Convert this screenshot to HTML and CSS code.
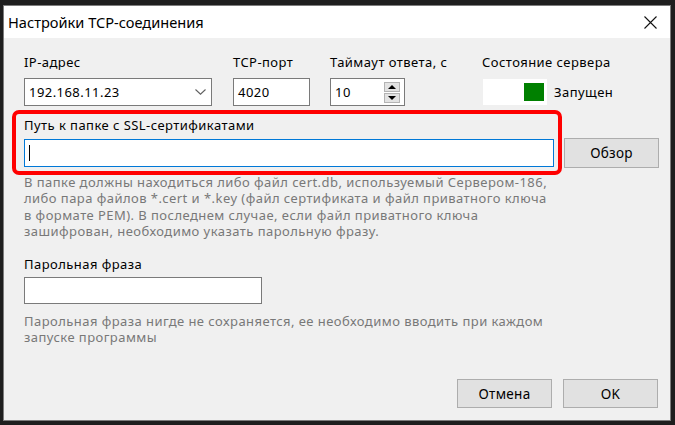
FILE: index.html
```html
<!DOCTYPE html>
<html lang="ru">
<head>
    <meta charset="UTF-8">
    <title>Настройки TCP-соединения</title>
    <link rel="stylesheet" href="styles.css">
</head>
<body>
    <div class="window">
        <div class="titlebar">
            <span class="title">Настройки TCP-соединения</span>
            <span class="close">
                <svg width="13" height="13" viewBox="0 0 13 13"><path d="M0.5 0.5L12.5 12.5M12.5 0.5L0.5 12.5" stroke="#111" stroke-width="1.1" fill="none"/></svg>
            </span>
        </div>
        <div class="content">
            <div class="top-row">
                <div class="field">
                    <div class="label">IP-адрес</div>
                    <div class="combo">
                        <span>192.168.11.23</span>
                        <svg class="chevron" width="11" height="6" viewBox="0 0 11 6"><path d="M0.5 0.5L5.5 5.2L10.5 0.5" stroke="#606060" stroke-width="1.1" fill="none"/></svg>
                    </div>
                </div>
                <div class="field">
                    <div class="label">TCP-порт</div>
                    <div class="edit port">4020</div>
                </div>
                <div class="field">
                    <div class="label">Таймаут ответа, с</div>
                    <div class="edit timeout">
                        <span>10</span>
                        <div class="spin-btns">
                            <span class="spin-btn"><i class="arrow up"></i></span>
                            <span class="spin-btn"><i class="arrow down"></i></span>
                        </div>
                    </div>
                </div>
                <div class="field">
                    <div class="label">Состояние сервера</div>
                    <div class="status">
                        <div class="status-box"><span class="led"></span></div>
                        <span>Запущен</span>
                    </div>
                </div>
            </div>

            <div class="ssl">
                <div class="highlight"></div>
                <div class="label">Путь к папке с SSL-сертификатами</div>
                <div class="ssl-row">
                    <div class="edit path focused"><span class="caret"></span></div>
                    <button class="btn">Обзор</button>
                </div>
            </div>

            <p class="hint hint-ssl">В папке должны находиться либо файл cert.db, используемый Сервером-186,<br>либо пара файлов *.cert и *.key (файл сертификата и файл приватного ключа<br>в формате PEM). В последнем случае, если файл приватного ключа<br>зашифрован, необходимо указать парольную фразу.</p>

            <div class="label pass-label">Парольная фраза</div>
            <div class="edit pass"></div>

            <p class="hint hint-pass">Парольная фраза нигде не сохраняется, ее необходимо вводить при каждом<br>запуске программы</p>

            <div class="buttons">
                <button class="btn">Отмена</button>
                <button class="btn">OK</button>
            </div>
        </div>
    </div>
</body>
</html>
```

FILE: styles.css
```css
body {
    margin: 0;
    background-color: #1e1e1e;
    font-family: "Noto Sans", "Open Sans", sans-serif;
    font-size: 13px;
    letter-spacing: 0.45px;
    color: #000;
}
.window {
    margin: 5px 0 0 3px;
    width: 666px;
    height: 414px;
    border: 1px solid #7c7c7c;
    background: #f0f0f0;
    display: flex;
    flex-direction: column;
}
.titlebar {
    height: 32px;
    background: #fff;
    display: flex;
    align-items: center;
    justify-content: space-between;
    padding: 0 13px 0 4px;
}
.title {
    font-size: 14.6px;
    letter-spacing: 0;
}
.close {
    display: flex;
}
.content {
    flex: 1;
    display: flex;
    flex-direction: column;
    padding: 16px 11px 12px 20px;
}
.label {
    height: 16px;
    line-height: 16px;
    white-space: nowrap;
}
.top-row {
    display: grid;
    grid-template-columns: 209px 97px 152px auto;
}
.field .label {
    margin-bottom: 8px;
}
.edit, .combo {
    box-sizing: border-box;
    height: 28px;
    border: 1px solid #7a7a7a;
    background: #fff;
    display: flex;
    align-items: center;
    padding-left: 4px;
}
.combo {
    width: 188px;
    justify-content: space-between;
    padding-right: 5px;
}
.port {
    width: 77px;
}
.timeout {
    width: 75px;
    justify-content: space-between;
    padding-right: 4px;
}
.spin-btns {
    display: flex;
    flex-direction: column;
    gap: 1px;
}
.spin-btn {
    box-sizing: border-box;
    width: 16px;
    height: 10px;
    background: #e3e3e3;
    border: 1px solid #b4b4b4;
    display: flex;
    align-items: center;
    justify-content: center;
}
.arrow {
    width: 0;
    height: 0;
    border-left: 4px solid transparent;
    border-right: 4px solid transparent;
}
.arrow.up {
    border-bottom: 4px solid #000;
}
.arrow.down {
    border-top: 4px solid #000;
}
.status {
    display: flex;
    align-items: center;
    gap: 7px;
    height: 28px;
    margin-left: 1px;
}
.status-box {
    width: 64px;
    height: 26px;
    background: #fff;
    display: flex;
    align-items: center;
    justify-content: flex-end;
    padding-right: 3px;
    box-sizing: border-box;
}
.led {
    width: 20px;
    height: 18px;
    background: #008000;
}
.ssl {
    position: relative;
    margin-top: 11px;
}
.highlight {
    position: absolute;
    left: -12px;
    top: -7px;
    width: 550px;
    height: 65px;
    box-sizing: border-box;
    border: 4px solid #ff0000;
    border-radius: 7px;
}
.ssl-row {
    display: flex;
    align-items: center;
    gap: 10px;
    margin-top: 5px;
}
.path {
    width: 530px;
}
.focused {
    border-color: #0078d7;
}
.caret {
    width: 1px;
    height: 16px;
    background: #000;
}
.btn {
    box-sizing: border-box;
    width: 95px;
    height: 30px;
    font-family: inherit;
    font-size: 13.5px;
    letter-spacing: 0.3px;
    color: #000;
    background: #e1e1e1;
    border: 1px solid #adadad;
    border-radius: 0;
    padding: 0;
}
.hint {
    margin: 0;
    color: #787878;
    line-height: 16.4px;
    white-space: nowrap;
}
.hint-ssl {
    margin-top: 6px;
}
.pass-label {
    margin-top: 16px;
}
.pass {
    width: 238px;
    height: 27px;
    margin-top: 5px;
}
.hint-pass {
    margin-top: 9px;
}
.buttons {
    margin-top: auto;
    display: flex;
    justify-content: flex-end;
    gap: 11px;
    padding-right: 1px;
}
.buttons .btn {
    height: 29px;
}
```
